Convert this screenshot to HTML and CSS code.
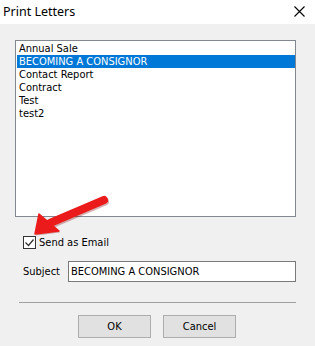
FILE: index.html
```html
<!DOCTYPE html>
<html>
<head>
<meta charset="utf-8">
<link rel="stylesheet" href="styles.css">
</head>
<body>
<div class="window">
  <div class="titlebar">
    <span class="title">Print Letters</span>
    <svg class="close" width="11" height="11" viewBox="0 0 11 11"><path d="M0.5 0.5 L10.5 10.5 M10.5 0.5 L0.5 10.5" stroke="#000" stroke-width="1.1" fill="none"/></svg>
  </div>
  <div class="content">
    <div class="listbox">
      <div class="item">Annual Sale</div>
      <div class="item selected">BECOMING A CONSIGNOR</div>
      <div class="item">Contact Report</div>
      <div class="item">Contract</div>
      <div class="item">Test</div>
      <div class="item">test2</div>
    </div>
    <div class="check-row">
      <span class="checkbox">
        <svg width="11" height="11" viewBox="0 0 11 11"><path d="M1.5 5.5 L4.5 8.5 L9.5 2.5" stroke="#333" stroke-width="1.2" fill="none"/></svg>
      </span>
      <span class="check-label">Send as Email</span>
    </div>
    <div class="subject-row">
      <span class="subject-label">Subject</span>
      <div class="textbox">BECOMING A CONSIGNOR</div>
    </div>
    <div class="separator"></div>
    <div class="buttons">
      <div class="btn">OK</div>
      <div class="btn">Cancel</div>
    </div>
  </div>
  <svg class="arrow" width="315" height="346" viewBox="0 0 315 346">
    <g fill="#7a0000" opacity="0.3" transform="translate(1,1.5)">
      <line x1="104" y1="200" x2="50" y2="223" stroke="#7a0000" stroke-width="8" stroke-linecap="round"/>
      <polygon points="35,234 39,214 59,231"/>
    </g>
    <line x1="104" y1="200" x2="50" y2="223" stroke="#ec1b1b" stroke-width="8" stroke-linecap="round"/>
    <polygon points="35,234 39,214 59,231" fill="#ec1b1b" stroke="#ec1b1b" stroke-width="1.5" stroke-linejoin="round"/>
  </svg>
</div>
</body>
</html>
```
FILE: styles.css
```css
html, body {
  margin: 0;
  padding: 0;
  background: #f0f0f0;
}
.window {
  position: relative;
  width: 315px;
  height: 346px;
  background: #f0f0f0;
  overflow: hidden;
  font-family: "DejaVu Sans Condensed", "DejaVu Sans", sans-serif;
  font-stretch: condensed;
  font-size: 11px;
  color: #000;
}
.titlebar {
  height: 24px;
  background: #fff;
  display: flex;
  align-items: center;
  justify-content: space-between;
  padding: 0 10px 0 3px;
  box-sizing: border-box;
}
.title {
  font-family: "Noto Sans", "Open Sans", sans-serif;
  font-stretch: normal;
  font-size: 12.5px;
  margin-top: -1px;
}
.close {
  display: block;
  margin-top: -2px;
}
.content {
  padding: 16px 0 0 15px;
  display: flex;
  flex-direction: column;
}
.listbox {
  width: 281px;
  height: 177px;
  box-sizing: border-box;
  border: 1px solid #828790;
  background: #fff;
  padding: 1px 0 0 1px;
}
.item {
  height: 13px;
  line-height: 13px;
  padding-left: 2px;
  white-space: nowrap;
}
.item.selected {
  background: #0078d7;
  color: #fff;
}
.check-row {
  display: flex;
  align-items: center;
  margin: 19px 0 0 8px;
  height: 13px;
}
.checkbox {
  width: 13px;
  height: 13px;
  box-sizing: border-box;
  border: 1px solid #333;
  background: #fff;
  display: flex;
  align-items: center;
  justify-content: center;
}
.check-label {
  margin-left: 3px;
}
.subject-row {
  display: flex;
  align-items: center;
  margin: 12px 0 0 8px;
}
.subject-label {
  width: 45px;
}
.textbox {
  width: 228px;
  height: 21px;
  box-sizing: border-box;
  border: 1px solid #7a7a7a;
  background: #fff;
  line-height: 19px;
  padding-left: 2px;
  white-space: nowrap;
}
.separator {
  margin: 20px 0 0 4px;
  width: 277px;
  height: 1px;
  background: #a0a0a0;
}
.buttons {
  display: flex;
  gap: 12px;
  margin: 12px 0 0 63px;
}
.btn {
  width: 73px;
  height: 23px;
  box-sizing: border-box;
  border: 1px solid #adadad;
  background: #e1e1e1;
  display: flex;
  align-items: center;
  justify-content: center;
}
.arrow {
  position: absolute;
  left: 0;
  top: 0;
  pointer-events: none;
}
```
